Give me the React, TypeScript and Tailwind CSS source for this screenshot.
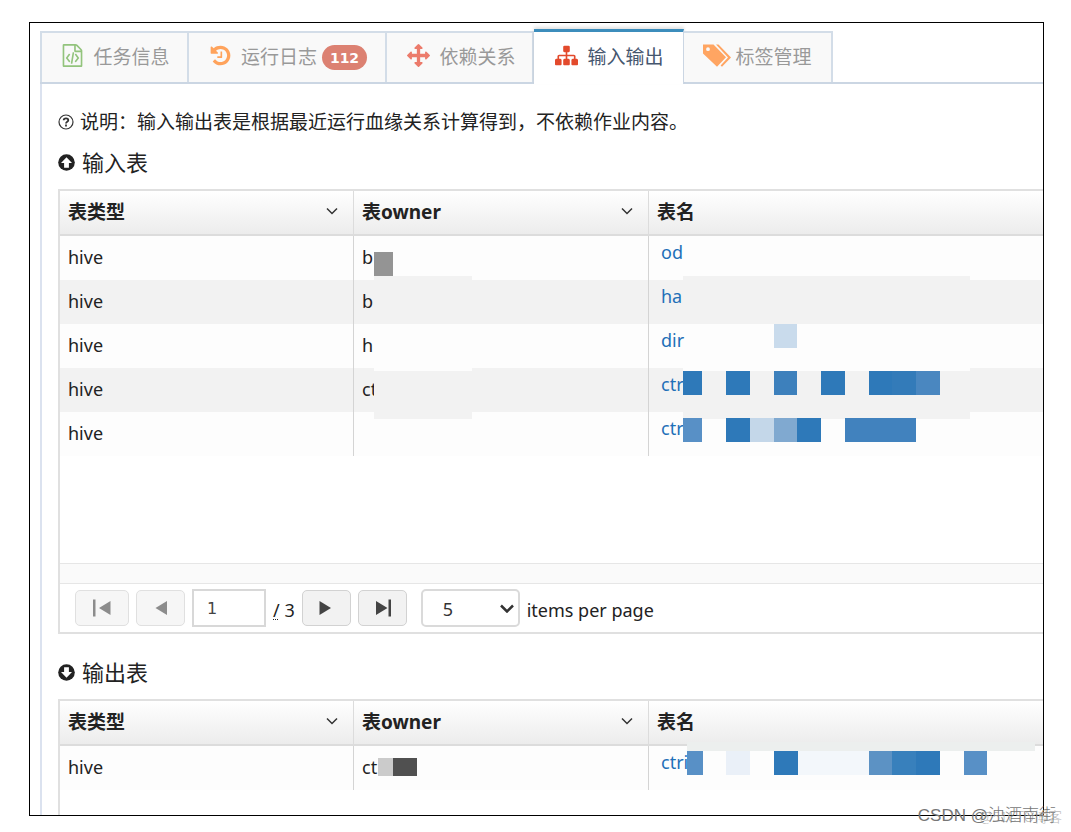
import type { ReactNode } from "react";

type Tab = { label: string; icon: ReactNode; badge?: string; active?: boolean; width: string };
type Row = { owner: string; name: string; ownerTiles?: string[]; nameTiles?: string[] };

function Glyph({ d, className, box = "0 0 1792 1792" }: { d: string; className: string; box?: string }) {
  return (
    <svg viewBox={box} className={className} fill="currentColor" aria-hidden="true">
      <path d={d} />
    </svg>
  );
}

const FILE_CODE =
  "M1596 380q28 28 48 76t20 88v1152q0 40-28 68t-68 28h-1344q-40 0-68-28t-28-68v-1600q0-40 28-68t68-28h896q40 0 88 20t76 48zm-444-244v376h376q-10-29-22-41l-313-313q-12-12-41-22zm384 1528v-1024h-416q-40 0-68-28t-28-68v-416h-768v1536h1280zm-928-896q8-11 21-12.5t24 6.5l51 38q11 8 12.5 21t-6.5 24l-182 243 182 243q8 11 6.5 24t-12.5 21l-51 38q-11 8-24 6.5t-21-12.5l-226-301q-14-19 0-38zm802 301q14 19 0 38l-226 301q-8 11-21 12.5t-24-6.5l-51-38q-11-8-12.5-21t6.5-24l182-243-182-243q-8-11-6.5-24t12.5-21l51-38q11-8 24-6.5t21 12.5zm-620 461q-13-2-20.5-13t-5.5-24l138-831q2-13 13-20.5t24-5.5l63 10q13 2 20.5 13t5.5 24l-138 831q-2 13-13 20.5t-24 5.5z";
const HISTORY =
  "M1664 896q0 156-61 298t-164 245-245 164-298 61q-172 0-327-72.5t-264-204.5q-7-10-6.5-22.5t8.5-20.5l137-138q10-9 25-9 16 2 23 12 73 95 179 147t225 52q104 0 198.5-40.5t163.5-109.5 109.5-163.5 40.5-198.5-40.5-198.5-109.5-163.5-163.5-109.5-198.5-40.5q-98 0-188 35.5t-160 101.5l137 138q31 30 14 69-17 40-59 40h-448q-26 0-45-19t-19-45v-448q0-42 40-59 39-17 69 14l130 129q107-101 244.5-156.5t284.5-55.5q156 0 298 61t245 164 164 245 61 298zm-640-288v448q0 14-9 23t-23 9h-320q-14 0-23-9t-9-23v-64q0-14 9-23t23-9h224v-352q0-14 9-23t23-9h64q14 0 23 9t9 23z";
const ARROWS =
  "M1792 896q0 26-19 45l-256 256q-19 19-45 19t-45-19-19-45v-128h-384v384h128q26 0 45 19t19 45-19 45l-256 256q-19 19-45 19t-45-19l-256-256q-19-19-19-45t19-45 45-19h128v-384h-384v128q0 26-19 45t-45 19-45-19l-256-256q-19-19-19-45t19-45l256-256q19-19 45-19t45 19 19 45v128h384v-384h-128q-26 0-45-19t-19-45 19-45l256-256q19-19 45-19t45 19l256 256q19 19 19 45t-19 45-45 19h-128v384h384v-128q0-26 19-45t45-19 45 19l256 256q19 19 19 45z";
const SITEMAP =
  "M1792 1248v320q0 40-28 68t-68 28h-320q-40 0-68-28t-28-68v-320q0-40 28-68t68-28h96v-192h-512v192h96q40 0 68 28t28 68v320q0 40-28 68t-68 28h-320q-40 0-68-28t-28-68v-320q0-40 28-68t68-28h96v-192h-512v192h96q40 0 68 28t28 68v320q0 40-28 68t-68 28h-320q-40 0-68-28t-28-68v-320q0-40 28-68t68-28h96v-192q0-52 38-90t90-38h512v-192h-96q-40 0-68-28t-28-68v-320q0-40 28-68t68-28h320q40 0 68 28t28 68v320q0 40-28 68t-68 28h-96v192h512q52 0 90 38t38 90v192h96q40 0 68 28t28 68z";

const tabs: Tab[] = [
  {
    label: "任务信息",
    width: "w-[149px] gap-[9px] pl-0.5",
    icon: <Glyph d={FILE_CODE} className="mb-1 h-[23px] w-[23px] text-[#93c47d]" />,
  },
  {
    label: "运行日志",
    width: "w-[198px] gap-[9px] pl-0.5",
    badge: "112",
    icon: <Glyph d={HISTORY} className="mb-1 h-[23px] w-[23px] text-[#ffa35c]" />,
  },
  {
    label: "依赖关系",
    width: "w-[147px] gap-[9px] pl-1",
    icon: <Glyph d={ARROWS} className="mb-1 h-[23px] w-[23px] text-[#ec7b6b]" />,
  },
  {
    label: "输入输出",
    width: "w-[150px] gap-[9px] pl-0.5",
    active: true,
    icon: <Glyph d={SITEMAP} className="mb-1 h-[23px] w-[23px] text-[#e34a2c]" />,
  },
  {
    label: "标签管理",
    width: "w-[149px] gap-1",
    icon: (
      <svg viewBox="0 0 28 23" className="mb-1 h-[23px] w-7 text-[#ffa562]" fill="currentColor" aria-hidden="true">
        <path fillRule="evenodd" d="M0 .5H10.500L23 13.200 14 22.800 0 9.500ZM5 3.300a1.900 1.900 0 1 0 0 3.800a1.900 1.900 0 0 0 0-3.800Z" />
        <path d="M13 .5h2.500L28 13.500 19 22.800 17.600 21.400 25 13.500Z" />
      </svg>
    ),
  },
];

const inputRows: Row[] = [
  { owner: "b", name: "od", ownerTiles: ["left-[20px] top-[16px] h-6 w-[19px] bg-[#949494]"] },
  {
    owner: "b",
    name: "ha",
    ownerTiles: ["left-[20px] -top-1 h-1 w-[98px] bg-[#f2f2f2]"],
    nameTiles: ["left-[34px] -top-1 h-1 w-[287px] bg-[#f2f2f2]"],
  },
  {
    owner: "h",
    name: "dir",
    nameTiles: ["left-[125px] top-0 h-6 w-[23px] bg-[#c9dbec]"],
  },
  {
    owner: "ct",
    name: "ctr",
    ownerTiles: [
      "left-[20px] top-0 h-[3px] w-[98px] bg-[#fdfdfd]",
      "left-[20px] top-[3px] h-12 w-[98px] bg-[#f2f2f2]",
    ],
    nameTiles: [
      "left-[34px] top-0 h-[3px] w-[287px] bg-[#fdfdfd]",
      "left-[34px] top-[3px] h-12 w-[287px] bg-[#f2f2f2]",
      "left-[34px] top-[3px] h-6 w-[19px] bg-[#2e79b9]",
      "left-[77px] top-[3px] h-6 w-6 bg-[#2e79b9]",
      "left-[125px] top-[3px] h-6 w-[23px] bg-[#3d80bc]",
      "left-[172px] top-[3px] h-6 w-6 bg-[#2e79b9]",
      "left-[220px] top-[3px] h-6 w-6 bg-[#2e79b9]",
      "left-[243px] top-[3px] h-6 w-6 bg-[#337bb9]",
      "left-[267px] top-[3px] h-6 w-6 bg-[#4a87c0]",
    ],
  },
  {
    owner: "",
    name: "ctr",
    nameTiles: [
      "left-[34px] top-[6px] h-6 w-[19px] bg-[#5890c6]",
      "left-[77px] top-[6px] h-6 w-6 bg-[#2e79b9]",
      "left-[101px] top-[6px] h-6 w-6 bg-[#c4d7e9]",
      "left-[125px] top-[6px] h-6 w-6 bg-[#80a9d0]",
      "left-[148px] top-[6px] h-6 w-6 bg-[#2e79b9]",
      "left-[196px] top-[6px] h-6 w-[71px] bg-[#4182be]",
    ],
  },
];

const outputRows: Row[] = [
  {
    owner: "ct",
    name: "ctri",
    ownerTiles: ["left-[24px] top-[12px] h-[18px] w-4 bg-[#cbcbcb]", "left-[39px] top-[12px] h-[18px] w-6 bg-[#505050]"],
    nameTiles: [
      "left-[38px] -top-1 h-[9px] w-[348px] bg-[#ecefee]",
      "left-[38px] top-[5px] h-6 w-4 bg-[#5890c6]",
      "left-[77px] top-[5px] h-6 w-6 bg-[#eaf0f8]",
      "left-[125px] top-[5px] h-6 w-6 bg-[#2e79b9]",
      "left-[149px] top-[5px] h-6 w-[72px] bg-[#f3f7fb]",
      "left-[220px] top-[5px] h-6 w-6 bg-[#5c92c4]",
      "left-[243px] top-[5px] h-6 w-6 bg-[#3880bc]",
      "left-[267px] top-[5px] h-6 w-6 bg-[#2e79b9]",
      "left-[315px] top-[5px] h-6 w-[23px] bg-[#5890c6]",
    ],
  },
];

function Tiles({ items = [] }: { items?: string[] }) {
  return (
    <>
      {items.map((tile) => (
        <span key={tile} className={`absolute z-10 ${tile}`} />
      ))}
    </>
  );
}

function HeaderCell({ label, menu }: { label: string; menu?: boolean }) {
  return (
    <th className="h-[45px] border-b-2 border-l border-[#dcdcdc] bg-linear-to-b from-white to-[#ececec] px-2 text-left text-[19px] font-bold first:border-l-0">
      <div className="flex items-center justify-between">
        <span>{label}</span>
        {menu && (
          <button type="button" aria-label={`${label} 菜单`} className="mr-[3px] mb-1 flex h-5 w-5 items-center justify-center">
            <svg viewBox="0 0 12 8" className="h-2 w-3" fill="none" stroke="#333" strokeWidth="1.5" aria-hidden="true">
              <path d="m1 1.500 5 5 5-5" />
            </svg>
          </button>
        )}
      </div>
    </th>
  );
}

function Grid({ rows }: { rows: Row[] }) {
  return (
    <table className="w-full table-fixed border-separate border-spacing-0">
      <colgroup>
        <col className="w-[293px]" />
        <col className="w-[295px]" />
        <col />
      </colgroup>
      <thead>
        <tr>
          <HeaderCell label="表类型" menu />
          <HeaderCell label="表owner" menu />
          <HeaderCell label="表名" />
        </tr>
      </thead>
      <tbody className="text-lg leading-6">
        {rows.map((row, i) => (
          <tr key={i} className="h-11 bg-[#fdfdfd] even:bg-[#f2f2f2]">
            <td className="px-2 pb-0.5">hive</td>
            <td className="relative border-l border-[#d4d4d4] px-2 pb-0.5">
              {row.owner}
              <Tiles items={row.ownerTiles} />
            </td>
            <td className="relative border-l border-[#d4d4d4] px-3 pb-3">
              <a href="#table" className="text-[#1f70b8]">
                {row.name}
              </a>
              <Tiles items={row.nameTiles} />
            </td>
          </tr>
        ))}
      </tbody>
    </table>
  );
}

function PagerButton({ label, d, wide, disabled }: { label: string; d: string; wide?: boolean; disabled?: boolean }) {
  return (
    <button
      type="button"
      aria-label={label}
      disabled={disabled}
      className={`flex h-9 items-center justify-center rounded-[5px] border border-[#d2d2d2] bg-[#f2f2f2] text-[#444] disabled:border-[#e0e0e0] disabled:bg-[#f6f6f6] disabled:text-[#8c8c8c] ${wide ? "w-[54px]" : "w-[49px]"}`}
    >
      <Glyph d={d} box="0 0 20 20" className="h-5 w-5" />
    </button>
  );
}

function Pager() {
  return (
    <div className="flex h-12 items-center pl-[15px] text-lg">
      <div className="flex items-center gap-[7px]">
        <PagerButton label="第一页" wide disabled d="M1 1.500h2.500v17H1zM18.500 3v14L7 10z" />
        <PagerButton label="上一页" disabled d="M16 3v14L4.500 10z" />
        <input
          aria-label="页码"
          defaultValue="1"
          className="h-[38px] w-[74px] border-2 border-[#d8d8d8] bg-white pl-[13px] font-['DejaVu_Sans'] text-base text-[#444]"
        />
        <span className="pt-1">
          <abbr title="总页数" className="underline decoration-dotted decoration-1 underline-offset-2">
            /
          </abbr>{" "}
          3
        </span>
        <PagerButton label="下一页" d="M3.500 3v14L15 10z" />
        <PagerButton label="最后一页" d="M4 3v14l11.500-7zM16.500 1.500H19v17h-2.500z" />
      </div>
      <label className="ml-[14px] flex items-center gap-[7px]">
        <span className="relative flex items-center">
          <select defaultValue="5" className="h-[38px] w-[99px] appearance-none rounded-[5px] border-2 border-[#dadada] bg-white pt-0.5 pl-5 text-lg text-[#333]">
            <option>5</option>
            <option>10</option>
            <option>20</option>
          </select>
          <svg viewBox="0 0 14 9" className="pointer-events-none absolute right-[6px] h-[9px] w-[14px]" fill="none" stroke="#333" strokeWidth="2.500" aria-hidden="true">
            <path d="m1 1.500 6 6 6-6" />
          </svg>
        </span>
        <span className="pt-1">items per page</span>
      </label>
    </div>
  );
}

function SectionTitle({ up, children }: { up?: boolean; children: string }) {
  return (
    <h2 className="flex items-center gap-[7px] text-[22px] leading-8">
      <svg viewBox="0 0 17 17" className={up ? "h-[17px] w-[17px]" : "h-[17px] w-[17px] rotate-180"} aria-hidden="true">
        <circle cx="8.500" cy="8.500" r="8.300" fill="#222" />
        <path d="M8.500 3.200 14 9H10.900V13.800H6.100V9H3Z" fill="#fff" />
      </svg>
      {children}
    </h2>
  );
}

export default function App() {
  return (
    <div className="relative bg-white pt-[22px] pr-[27px] pb-4 pl-[29px] font-['Noto_Sans','Noto_Sans_CJK_SC',sans-serif] text-[#222]">
      <main className="overflow-hidden border border-black pt-1.5 pl-[10px]">
        <nav role="tablist" className="relative z-10 flex items-end border-b-2 border-[#cbd6e3]">
          {tabs.map((tab) => (
            <button
              key={tab.label}
              type="button"
              role="tab"
              aria-selected={!!tab.active}
              className={`flex items-center justify-center text-[19px] whitespace-nowrap ${tab.width} ${
                tab.active
                  ? "-mb-0.5 h-[55px] border-t-[3px] border-r border-[#cbd6e3] border-t-[#3c8dbc] bg-white pb-0.5 text-[#45566e] shadow-[0_-2px_3px_rgba(0,0,0,0.12)]"
                  : "h-[51px] border-t-2 border-r-2 border-[#d3dde8] bg-[#f9f9f9] text-[#999] first:border-l-2"
              }`}
            >
              {tab.icon}
              <span>{tab.label}</span>
              {tab.badge && (
                <span className="-ml-1 flex h-[25px] items-center rounded-full bg-[#dc8172] px-2 font-['DejaVu_Sans'] text-sm font-bold text-white">
                  {tab.badge}
                </span>
              )}
            </button>
          ))}
        </nav>
        <div className="border-l-2 border-[#dbe2ef] pl-4">
          <p className="flex items-center gap-[6px] pt-6 text-[19px] leading-7">
            <svg viewBox="0 0 16 16" className="h-4 w-4" fill="none" stroke="#333" aria-hidden="true">
              <circle cx="8" cy="8" r="7" strokeWidth="1.200" />
              <path d="M5.700 6.300C5.700 3.700 10.300 3.700 10.300 6.300C10.300 7.800 8 7.700 8 9.400M8 10.600v1.800" strokeWidth="1.800" />
            </svg>
            说明：输入输出表是根据最近运行血缘关系计算得到，不依赖作业内容。
          </p>
          <section className="pt-2.5">
            <SectionTitle up>输入表</SectionTitle>
            <div className="mt-[11px] border-y-2 border-l-2 border-[#e0e0e0]">
              <Grid rows={inputRows} />
              <div className="mt-[107px] h-[21px] border-y border-[#e6e6e6] bg-[#fafafa]" />
              <Pager />
            </div>
          </section>
          <section className="pt-[22px]">
            <SectionTitle>输出表</SectionTitle>
            <div className="mt-[11px] border-t-2 border-l-2 border-[#e0e0e0] pb-[25px]">
              <Grid rows={outputRows} />
            </div>
          </section>
        </div>
      </main>
      <div className="pointer-events-none absolute right-[9px] bottom-1.5 font-['Noto_Sans_CJK_SC'] text-sm leading-5 font-light text-[#bbb]">@51CTO博客</div>
      <div className="pointer-events-none absolute right-[15px] bottom-1.5 font-['Liberation_Sans','Noto_Sans_CJK_SC',sans-serif] text-[17px] leading-5 font-light text-[#777]">CSDN @浊酒南街</div>
    </div>
  );
}
